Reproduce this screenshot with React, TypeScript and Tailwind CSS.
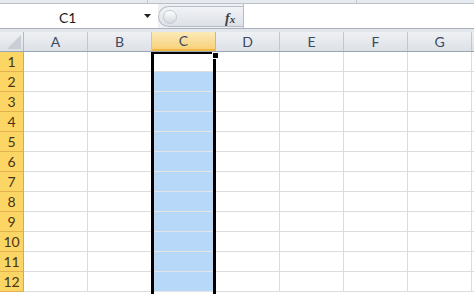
import React from "react";

const COLS = ["A", "B", "C", "D", "E", "F", "G", ""];
const ROWS = [1, 2, 3, 4, 5, 6, 7, 8, 9, 10, 11, 12];

export default function App() {
  return (
    <div className="w-[474px] h-[294px] overflow-hidden bg-white relative font-['Lato','Liberation_Sans',sans-serif]">
      {/* ribbon remnant */}
      <div className="h-[4px] bg-[#e6e9ee] border-b border-[#b9c1cc] flex">
        <div className="w-[148px] border-r border-[#c4cad3]" />
        <div className="w-[209px] border-r border-[#c4cad3]" />
      </div>

      {/* formula bar */}
      <div className="h-[25px] flex bg-[#eef0f3] border-b border-[#a9b2be]">
        <div className="w-[150px] bg-white flex items-center relative">
          <span className="absolute left-[59px] top-[3px] text-[14px] text-[#1c1c1c]">C1</span>
          <svg className="absolute left-[144px] top-[10px]" width="7" height="4" viewBox="0 0 7 4">
            <path d="M0 0H7L3.5 4Z" fill="#222" />
          </svg>
        </div>
        <div className="w-[8px] bg-white" />
        <div className="w-[85px] mt-[2px] mb-[1px] rounded-l-full bg-gradient-to-b from-[#f1f3f6] to-[#dde1e7] border border-[#b7bec8] border-r-0 flex items-center relative">
          <div className="absolute left-[4px] top-[3px] w-[14px] h-[14px] rounded-full bg-gradient-to-b from-[#ffffff] to-[#d3d8df] border border-[#c3c9d1]" />
          <span className="absolute left-[66px] top-[1px] text-[14px] italic font-bold text-[#404040] font-['Liberation_Serif',serif]">
            f<span className="text-[11px]">x</span>
          </span>
        </div>
        <div className="flex-1 bg-white border-l border-[#b7bec8]" />
      </div>

      {/* gap */}
      <div className="h-[3px] bg-[#e3e6ea]" />

      {/* column header */}
      <div className="h-[20px] flex bg-gradient-to-b from-[#eef0f3] to-[#dde1e6] border-b border-[#9aa6b5]">
        <div className="w-[24px] shrink-0 border-r border-[#b3bac4] relative">
          <svg className="absolute right-[2px] bottom-[2px]" width="14" height="14" viewBox="0 0 14 14">
            <path d="M14 0V14H0Z" fill="#c9ced6" />
          </svg>
        </div>
        {COLS.map((c, i) => (
          <div
            key={i}
            className={`w-[64px] shrink-0 border-r flex items-center justify-center text-[14px] ${
              c === "C"
                ? "bg-gradient-to-b from-[#fbeab8] to-[#f7d27a] border-[#e4b45a] border-b-2 border-b-[#f0b840] text-[#3c4a5e]"
                : "border-[#c1c7cf] text-[#3c4a64]"
            }`}
          >
            {c}
          </div>
        ))}
      </div>

      {/* grid */}
      <div className="relative">
        {ROWS.map((r) => (
          <div key={r} className="h-[20px] flex">
            <div className="w-[24px] shrink-0 bg-[#fcd664] border-r border-b border-r-[#e2a73b] border-b-[#e3b24f] flex items-center justify-center text-[14px] text-[#4a3316]">
              {r}
            </div>
            {COLS.map((c, i) => (
              <div
                key={i}
                className={`w-[64px] shrink-0 border-r border-b ${
                  c === "C" && r > 1
                    ? "bg-[#b8d8f9] border-b-[#e2e4e6] border-r-[#e2e4e6]"
                    : "bg-white border-[#dadcdd]"
                }`}
              />
            ))}
          </div>
        ))}

        {/* column selection outline */}
        <div className="absolute left-[151px] top-0 w-[65px] h-[260px] border-[3px] border-t-2 border-black" />
        <div className="absolute left-[212px] top-[0px] w-[7px] h-[7px] bg-black border border-white" />
      </div>
    </div>
  );
}
